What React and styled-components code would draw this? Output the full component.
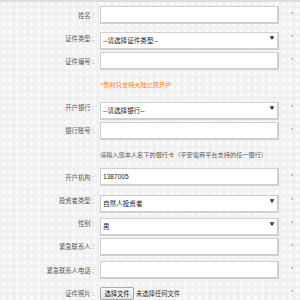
import styled, { createGlobalStyle } from "styled-components";

const GlobalStyle = createGlobalStyle`
  html, body {
    margin: 0;
    padding: 0;
  }
  body {
    font-family: "Liberation Sans", "Noto Sans CJK SC", sans-serif;
    background-color: #f1f1f1;
    background-image: radial-gradient(circle, #fbfbfb 1.6px, transparent 2.2px);
    background-size: 7px 7px;
  }
`;

const rows = [
  { label: "姓名", type: "input" },
  { label: "证件类型", type: "select", value: "--请选择证件类型--" },
  { label: "证件编号", type: "input" },
  { type: "warn", text: "*暂时只支持大陆公民开户" },
  { label: "开户银行", type: "select", value: "--请选择银行--" },
  { label: "银行账号", type: "input" },
  { type: "hint", text: "请输入您本人名下的银行卡（平安電商平台支持的任一银行）" },
  { label: "开户机构", type: "input", value: "1387005" },
  { label: "投资者类型", type: "select", value: "自然人投资者" },
  { label: "性别", type: "select", value: "男" },
  { label: "紧急联系人", type: "input" },
  { label: "紧急联系人电话", type: "input" },
  { label: "证件照片", type: "file" },
];

function Field({ row }) {
  if (row.type === "select") {
    return (
      <SelectWrap>
        <StyledSelect defaultValue={row.value}>
          <option>{row.value}</option>
        </StyledSelect>
        <Arrow viewBox="0 0 4 4">
          <rect x="0" y="0" width="4" height="0.7" fill="#111" />
          <polygon points="0,1.2 4,1.2 2,3.8" fill="#111" />
        </Arrow>
      </SelectWrap>
    );
  }
  if (row.type === "file") {
    return (
      <FileLine>
        <FileButton type="button">选择文件</FileButton>
        <FileText>未选择任何文件</FileText>
      </FileLine>
    );
  }
  return <StyledInput type="text" defaultValue={row.value || ""} />;
}

export default function App() {
  return (
    <>
      <GlobalStyle />
      <Form>
        {rows.map((row, i) =>
          row.type === "warn" || row.type === "hint" ? (
            <Row key={i}>
              <span />
              <Note warn={row.type === "warn"}>{row.text}</Note>
            </Row>
          ) : (
            <Row key={i}>
              <Label>{row.label} :</Label>
              <Field row={row} />
              <Star>*</Star>
            </Row>
          )
        )}
      </Form>
    </>
  );
}

const Form = styled.form`
  border-top: 2px solid #dcdcdc;
  padding-top: 4px;
  display: flex;
  flex-direction: column;
  gap: 5.2px;
`;

const Row = styled.div`
  display: grid;
  grid-template-columns: 100px 179px 1fr;
  align-items: center;
  height: 18px;
`;

const Label = styled.label`
  font-size: 6.3px;
  color: #5a5a5a;
  text-align: right;
  padding-right: 6px;
  white-space: nowrap;
`;

const Star = styled.span`
  font-size: 6px;
  color: #ee5555;
  padding-left: 12px;
  line-height: 1;
  align-self: center;
  margin-top: -2px;
`;

const boxStyles = `
  box-sizing: border-box;
  width: 179px;
  height: 18px;
  background: #fff;
  border: 1px solid #cfcfcf;
  border-right-width: 2px;
  border-bottom-width: 2px;
  border-radius: 0;
  padding: 0 2px;
  font-family: "Liberation Sans", "Noto Sans CJK SC", sans-serif;
  font-size: 6.6px;
  color: #222;
  outline: none;
  margin: 0;
`;

const StyledInput = styled.input`
  ${boxStyles}
`;

const SelectWrap = styled.div`
  position: relative;
  width: 179px;
  height: 18px;
`;

const StyledSelect = styled.select`
  ${boxStyles}
  appearance: none;
  -webkit-appearance: none;
`;

const Arrow = styled.svg`
  position: absolute;
  right: 5px;
  top: 7px;
  width: 4px;
  height: 4px;
  pointer-events: none;
`;

const Note = styled.div`
  font-size: 6.2px;
  color: ${({ warn }) => (warn ? "#ff7a1a" : "#5a5a5a")};
  white-space: nowrap;
  padding-left: ${({ warn }) => (warn ? "1px" : "0")};
`;

const FileLine = styled.div`
  display: flex;
  align-items: center;
  gap: 2px;
  white-space: nowrap;
`;

const FileButton = styled.button`
  box-sizing: border-box;
  height: 13px;
  width: 34px;
  padding: 0;
  font-family: "Liberation Sans", "Noto Sans CJK SC", sans-serif;
  font-size: 6.3px;
  color: #222;
  background: linear-gradient(#fafafa, #e4e4e4);
  border: 1px solid #a9a9a9;
  border-radius: 2px;
`;

const FileText = styled.span`
  font-size: 6.3px;
  color: #333;
`;
